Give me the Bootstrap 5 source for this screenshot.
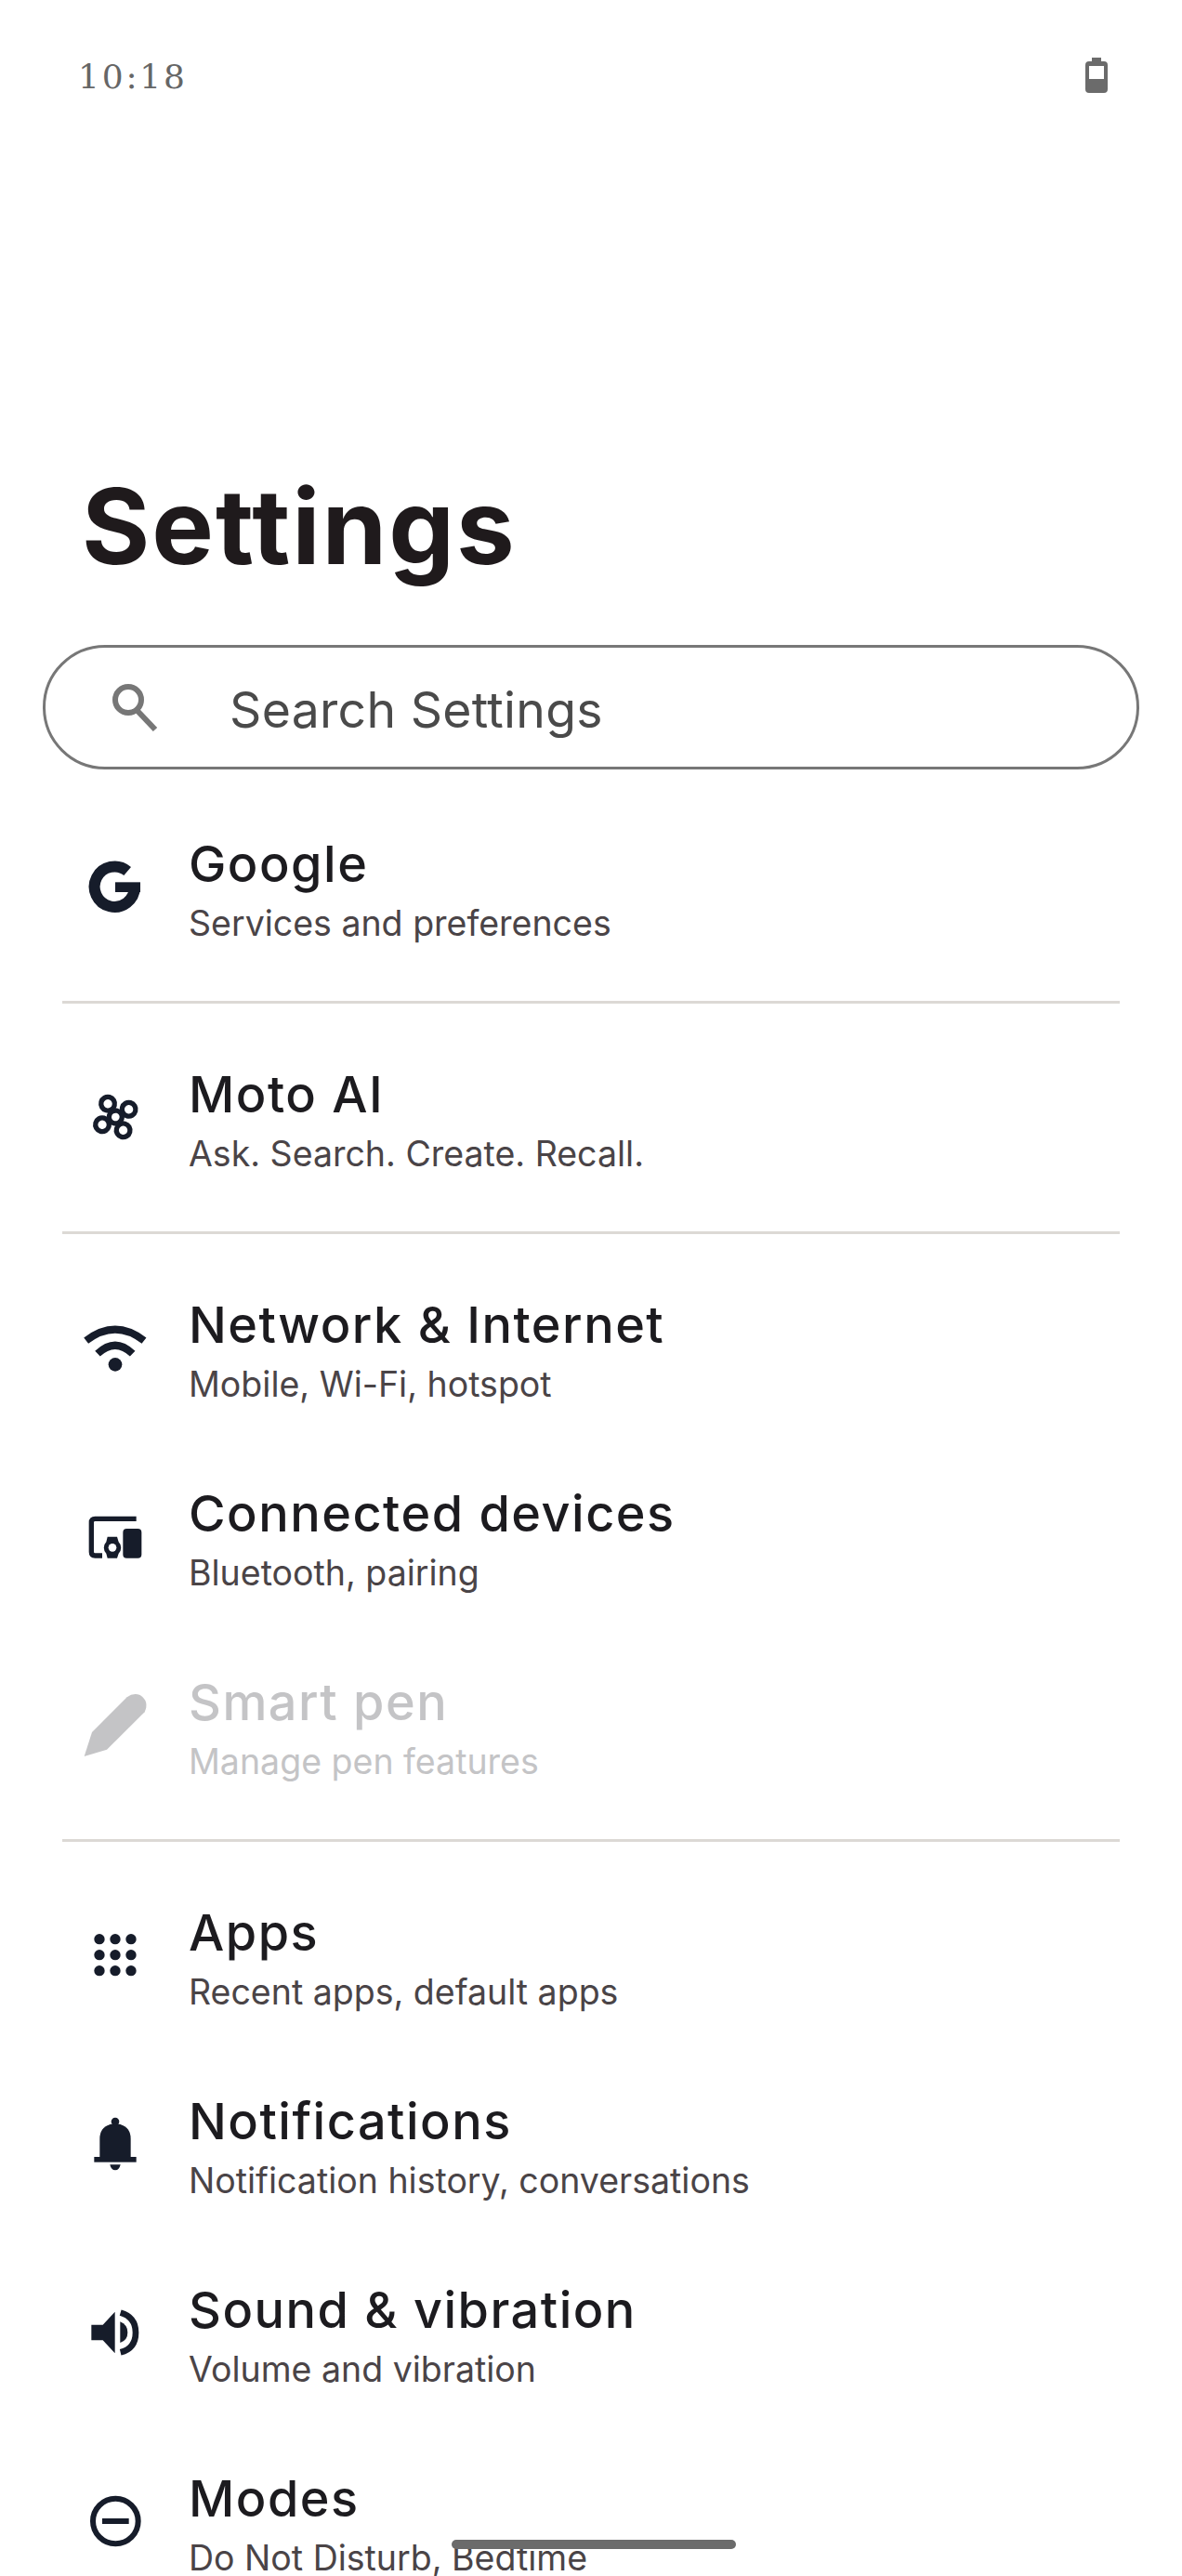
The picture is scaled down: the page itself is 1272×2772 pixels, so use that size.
<!doctype html>
<html lang="en"><head><meta charset="utf-8"><title>Settings</title>
<link href="https://cdn.jsdelivr.net/npm/bootstrap@5.3.0/dist/css/bootstrap.min.css" rel="stylesheet">
<style>
html,body{height:100%;overflow:hidden;background:#fff}
body{font-family:Inter,"Noto Sans",sans-serif}
.phone{height:2772px;overflow:hidden}
.statusbar{height:162px;padding:0 80px 0 84px;color:#666}
.clock{font-family:"DejaVu Serif",serif;font-size:36px;letter-spacing:2.8px;font-weight:400;line-height:1;padding-top:3px}
.hero{height:532px;padding:0 0 72px 88px}
.hero h1{font-size:112px;font-weight:700;line-height:1;color:#1f1a1c;margin:0;letter-spacing:2px}
.searchbox{height:134px;margin:0 46px;border:3px solid #777;padding:7px 0 0 71px;color:#4a4a4a;font-size:53.5px;letter-spacing:.3px}
.searchbox svg{margin:-7px 75px 0 0}
.rows{margin-top:32px}
.setrow{height:203px;padding-left:60px}
.setrow svg{flex:none;margin-right:23px}
.ttl{font-size:54px;font-weight:550;line-height:64px;color:#1c1b1f;letter-spacing:1.5px}
.sub{font-size:37.5px;line-height:64px;color:#4a4447}
.setrow.off .ttl,.setrow.off .sub{color:#c4c4c6}
.sep{margin:14px 67px 28px;border-top:3px solid #dcd9d5;opacity:1}
.homebar{left:486px;top:2733px;width:306px;height:10px;background:#6b6b6b}
</style></head><body>
<div class="phone position-relative">
  <div class="statusbar d-flex justify-content-between align-items-center">
    <span class="clock">10:18</span>
    <svg width="24" height="38" viewBox="0 0 24 38"><path fill="#6b6b6b" fill-rule="evenodd" d="M7 0h10v4h3a4 4 0 0 1 4 4v26a4 4 0 0 1-4 4H4a4 4 0 0 1-4-4V8a4 4 0 0 1 4-4h3zM4 9v14h16V9z"/></svg>
  </div>
  <div class="hero d-flex align-items-end"><h1>Settings</h1></div>
  <div class="searchbox rounded-pill d-flex align-items-center">
    <svg width="52" height="52" viewBox="0 0 52 52" fill="none" stroke="#777" stroke-width="6"><circle cx="18" cy="18" r="14"/><path d="M27 29l20 21"/></svg>
    <span>Search Settings</span>
  </div>
  <div class="rows">
    <div class="setrow d-flex align-items-center">
      <svg width="120" height="120" viewBox="0 64 360 360"><path d="M231.5 170.5A65 65 0 1 0 255 222" fill="none" stroke="#161c2a" stroke-width="36"/><rect x="192" y="206" width="81" height="32" fill="#161c2a"/></svg>
      <div><div class="ttl">Google</div><div class="sub">Services and preferences</div></div>
    </div>
    <div class="sep"></div>
    <div class="setrow d-flex align-items-center">
      <svg width="120" height="120" viewBox="0 24 360 360"><g fill="none" stroke="#161c2a" stroke-width="16" transform="rotate(15 193 180)"><circle cx="158" cy="145" r="22"/><circle cx="228" cy="145" r="22"/><circle cx="158" cy="215" r="22"/><circle cx="228" cy="215" r="22"/><circle cx="193" cy="180" r="21" fill="#fff"/></g></svg>
      <div><div class="ttl">Moto AI</div><div class="sub">Ask. Search. Create. Recall.</div></div>
    </div>
    <div class="sep"></div>
    <div class="setrow d-flex align-items-center">
      <svg width="120" height="120" viewBox="0 -6 360 360"><g fill="none" stroke="#161c2a" stroke-width="24"><path d="M98 128Q192 56 285 128"/><path d="M135 170Q192 116 248 170"/></g><circle cx="192" cy="205" r="22" fill="#161c2a"/></svg>
      <div><div class="ttl">Network &amp; Internet</div><div class="sub">Mobile, Wi-Fi, hotspot</div></div>
    </div>
    <div class="setrow d-flex align-items-center">
      <svg width="120" height="120" viewBox="0 0 360 360"><path d="M260 100H127Q115 100 115 112V207Q115 219 127 219H150" fill="none" stroke="#161c2a" stroke-width="16"/><rect x="217" y="132" width="60" height="95" rx="12" fill="#161c2a"/><path d="M167 158H198L203 175A26 26 0 0 1 203 212L198 227H167L163 212A26 26 0 0 1 163 175Z" fill="#161c2a"/><circle cx="183" cy="193" r="13" fill="#fff"/></svg>
      <div><div class="ttl">Connected devices</div><div class="sub">Bluetooth, pairing</div></div>
    </div>
    <div class="setrow off d-flex align-items-center">
      <svg width="120" height="120" viewBox="0 70 360 360"><path d="M230 137Q250 122 272 130Q303 150 287 185L165 306L92 328L117 250Z" fill="#c4c4c6"/></svg>
      <div><div class="ttl">Smart pen</div><div class="sub">Manage pen features</div></div>
    </div>
    <div class="sep"></div>
    <div class="setrow d-flex align-items-center">
      <svg width="120" height="120" viewBox="0 37 360 360"><g fill="#161c2a"><circle cx="141" cy="141" r="17"/><circle cx="192" cy="141" r="17"/><circle cx="243" cy="141" r="17"/><circle cx="141" cy="192" r="17"/><circle cx="192" cy="192" r="17"/><circle cx="243" cy="192" r="17"/><circle cx="141" cy="243" r="17"/><circle cx="192" cy="243" r="17"/><circle cx="243" cy="243" r="17"/></g></svg>
      <div><div class="ttl">Apps</div><div class="sub">Recent apps, default apps</div></div>
    </div>
    <div class="setrow d-flex align-items-center">
      <svg width="120" height="120" viewBox="0 45 360 360"><g fill="#161c2a"><path d="M142 243V185Q142 140 192 135Q242 140 242 185V243Z"/><circle cx="192" cy="129" r="13"/><rect x="124" y="243" width="136" height="17"/><path d="M175 268H209Q205 286 192 286Q179 286 175 268Z"/></g></svg>
      <div><div class="ttl">Notifications</div><div class="sub">Notification history, conversations</div></div>
    </div>
    <div class="setrow d-flex align-items-center">
      <svg width="120" height="120" viewBox="0 24 360 360"><g fill="#161c2a"><path d="M115 155H152L191 113V247L152 205H115Z"/><path d="M208 145Q232 155 232 180Q232 205 208 213Z"/></g><path d="M209 116Q258 130 258 180Q258 232 209 244" fill="none" stroke="#161c2a" stroke-width="20"/></svg>
      <div><div class="ttl">Sound &amp; vibration</div><div class="sub">Volume and vibration</div></div>
    </div>
    <div class="setrow d-flex align-items-center">
      <svg width="120" height="120" viewBox="0 0 360 360"><circle cx="193" cy="156" r="73" fill="none" stroke="#161c2a" stroke-width="18"/><rect x="150" y="147" width="86" height="18" fill="#161c2a"/></svg>
      <div><div class="ttl">Modes</div><div class="sub">Do Not Disturb, Bedtime</div></div>
    </div>
  </div>
  <div class="homebar position-absolute rounded-pill"></div>
</div>
</body></html>
